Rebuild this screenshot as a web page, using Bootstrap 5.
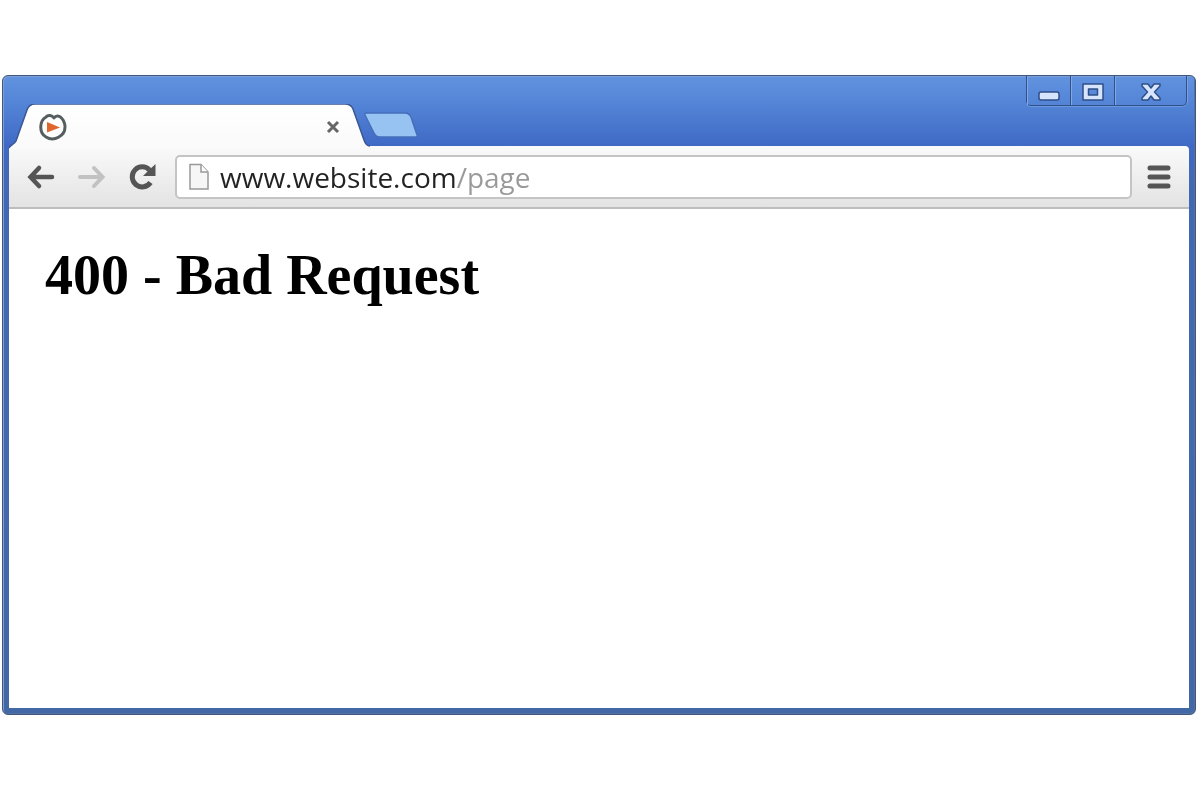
<!DOCTYPE html>
<html lang="en">
<head>
<meta charset="utf-8">
<meta name="viewport" content="width=device-width, initial-scale=1">
<title>400 - Bad Request</title>
<link href="https://cdn.jsdelivr.net/npm/bootstrap@5.3.0/dist/css/bootstrap.min.css" rel="stylesheet">
<style>
  body { background: #fff; padding: 75px 4px 0 2px; }
  .win {
    border: 1px solid #40577f;
    border-radius: 6px;
    padding: 0 6px 6px;
    background: linear-gradient(#6293e0 0, #5384d6 28px, #3f69c5 70px, #4169b4 100px, #4368a6 100%);
    box-shadow: inset 1px 1px 0 #7f9fd2, inset -1px -1px 0 #54719f;
  }
  .titlebar { height: 70px; }
  .tab-box { width: 361px; height: 42px; padding: 4px 30px 0 30px; }
  .tab-box .tab-shape { position: absolute; left: 0; top: 0; }
  .tab-box > :not(.tab-shape) { position: relative; }
  .plain { background: none; border: 0; padding: 0; line-height: 0; }
  .plain svg, .caption svg { display: block; }
  .new-tab { margin: 0 auto 7px -7px; }
  .caption {
    margin-right: 2px;
    border: 1px solid #315087;
    border-top: 0;
    border-radius: 0 0 5px 5px;
    box-shadow: 0 1px 0 #6c98dd, 1px 0 0 #7aa2e2;
  }
  .caption button { height: 29px; width: 44px; padding: 2px 0 0; border: 0; background: none; box-shadow: inset 1px 0 0 #83a9e4; }
  .caption button + button { border-left: 1px solid #315087; }
  .caption button:first-child { width: 43px; }
  .caption button:last-child { width: 72px; }
  .tools {
    height: 63px;
    padding: 0 18px 0 17px;
    background: linear-gradient(#fafafa, #e3e3e3);
    border-bottom: 2px solid #bdbdbd;
    border-radius: 4px 4px 0 0;
  }
  .tools .plain + .plain { margin-left: 22px; }
  .address {
    height: 44px;
    margin: 0 15px 0 19px;
    padding: 0 11px;
    gap: 10px;
    background: #fff;
    border: 2px solid #c4c4c4;
    border-radius: 5px;
  }
  .address input {
    min-width: 0;
    padding: 0;
    border: 0;
    outline: 0;
    font: 28px/38px "Open Sans", sans-serif;
    color: transparent;
    background: linear-gradient(90deg, #222 236px, #999 236px) text;
    -webkit-background-clip: text;
    background-clip: text;
  }
  .page { min-height: 499px; padding: 34px 36px; background: #fff; }
  .page h1 { font: bold 56px/64px "Liberation Serif", serif; color: #000; }
</style>
</head>
<body>
<div class="win">
  <header class="titlebar d-flex align-items-end">
    <div class="tab-box position-relative d-flex align-items-center justify-content-between">
      <svg class="tab-shape" width="361" height="46" viewBox="0 0 361 46" aria-hidden="true">
        <defs><linearGradient id="tabFill" x1="0" y1="0" x2="0" y2="1"><stop offset="0" stop-color="#fff"/><stop offset="1" stop-color="#fafafa"/></linearGradient></defs>
        <path d="M0 46C0 41 5 41 7 37L18 6Q20 0 26 0H336Q342 0 344 5L355 36Q357 42 361 42V46Z" fill="url(#tabFill)"/>
        <path d="M0 44C1 41 5 41 7 37L18 6Q20 0 26 0H336Q342 0 344 5L355 36Q357 42 361 42" fill="none" stroke="#3a5793" stroke-width="1.5"/>
      </svg>
      <svg width="28" height="28" viewBox="0 0 28 28" aria-hidden="true">
        <path d="M15 5C13 2 9 1.500 7 4C0 8 0 20 7 24C15 29 26 23 26 14C26 10 24.500 7 22 4.500C20 2.500 17 2 15 5Z" fill="#fff" stroke="#555d5f" stroke-width="3" stroke-linejoin="round"/>
        <path d="M8 9L21 14.500L8 19.500Z" fill="#df662c"/>
      </svg>
      <button class="plain" type="button" aria-label="Close tab">
        <svg width="14" height="14" viewBox="0 0 14 14"><path d="M2 2L12 12M12 2L2 12" stroke="#666" stroke-width="3"/></svg>
      </button>
    </div>
    <button class="plain new-tab position-relative" type="button" aria-label="New tab">
      <svg width="56" height="28" viewBox="0 0 56 28"><path d="M4 2H42Q46 2 48 6L54 24Q55 26 52 26H17Q13 26 11 22L2 4Q1 2 4 2Z" fill="#97c3f2" stroke="#466fb9" stroke-width="1.500"/></svg>
    </button>
    <div class="caption d-flex align-self-start">
      <button type="button" aria-label="Minimize"><svg class="mx-auto" width="24" height="24" viewBox="0 0 24 24"><rect x="2" y="12" width="20" height="8" rx="2" fill="#d6e5fb" stroke="#2f4e88" stroke-width="1.500"/></svg></button>
      <button type="button" aria-label="Maximize"><svg class="mx-auto" width="24" height="24" viewBox="0 0 24 24"><path fill-rule="evenodd" d="M2 4H22V20H2ZM7.500 9V15H16.500V9Z" fill="#d6e5fb" stroke="#2f4e88" stroke-width="1.500" stroke-linejoin="round"/></svg></button>
      <button type="button" aria-label="Close"><svg class="mx-auto" width="24" height="24" viewBox="0 0 24 24"><path d="M3 4H9L12 8L15 4H21V6L15.500 12L21 18V20H15L12 16L9 20H3V18L8.500 12L3 6Z" fill="#d6e5fb" stroke="#2f4e88" stroke-width="1.500" stroke-linejoin="round"/></svg></button>
    </div>
  </header>
  <nav class="tools d-flex align-items-center" aria-label="Browser toolbar">
    <button class="plain" type="button" aria-label="Back"><svg width="30" height="26" viewBox="0 0 30 26"><path d="M13 4L4.500 13L13 22M5 13H26" fill="none" stroke="#555" stroke-width="4.500" stroke-linecap="round"/></svg></button>
    <button class="plain" type="button" aria-label="Forward"><svg width="28" height="26" viewBox="0 0 28 26"><path d="M16 4L24.500 13L16 22M24 13H2" fill="none" stroke="#c2c2c2" stroke-width="4" stroke-linecap="round"/></svg></button>
    <button class="plain" type="button" aria-label="Reload"><svg width="28" height="28" viewBox="0 0 28 28"><path d="M21.500 7A10 10 0 1 0 22.500 19.500" fill="none" stroke="#555" stroke-width="5"/><path d="M27.500 1V13H15L20 8Z" fill="#555"/></svg></button>
    <div class="address d-flex flex-grow-1 align-items-center">
      <svg class="flex-shrink-0" width="22" height="28" viewBox="0 0 22 28" aria-hidden="true"><path d="M2 1.500H13L20 9V26H2Z" fill="#f6f6f6" stroke="#999" stroke-width="1.500"/><path d="M13 1.500V9H20" fill="#fff" stroke="#999" stroke-width="1.500"/></svg>
      <input class="flex-grow-1" type="text" aria-label="Address" value="www.website.com/page" spellcheck="false">
    </div>
    <button class="plain" type="button" aria-label="Menu"><svg width="24" height="24" viewBox="0 0 24 24"><path d="M3 3H21M3 12H21M3 21H21" stroke="#555" stroke-width="5" stroke-linecap="round"/></svg></button>
  </nav>
  <main class="page">
    <h1 class="m-0">400 - Bad Request</h1>
  </main>
</div>
<script src="https://cdn.jsdelivr.net/npm/bootstrap@5.3.0/dist/js/bootstrap.bundle.min.js"></script>
</body>
</html>
